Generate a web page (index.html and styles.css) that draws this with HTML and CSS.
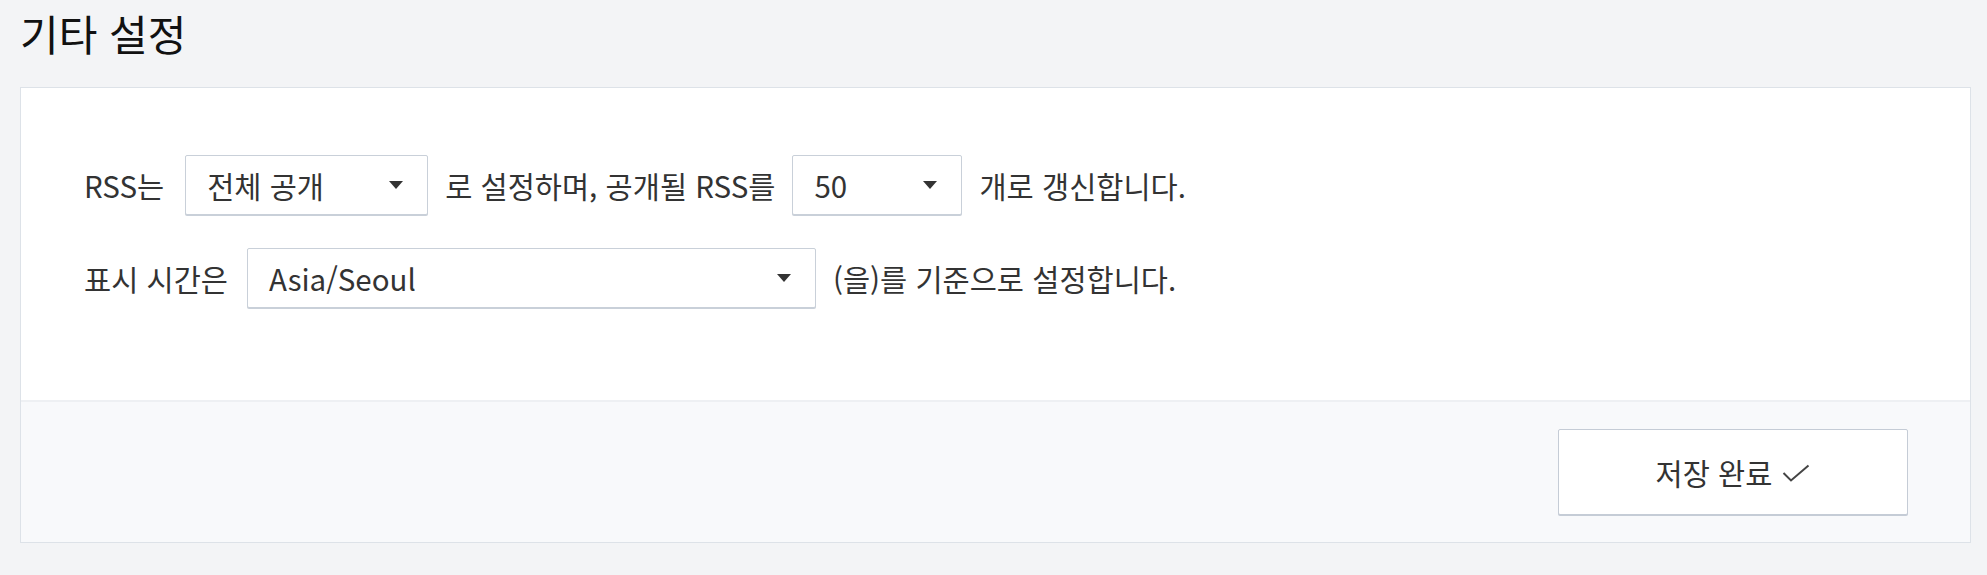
FILE: index.html
```html
<!DOCTYPE html>
<html lang="ko">
<head>
<meta charset="utf-8">
<title>기타 설정</title>
<link rel="stylesheet" href="styles.css">
</head>
<body>
<div class="page">
  <h1 class="title">기타 설정</h1>
  <section class="card">
    <div class="card-body">
      <div class="row">
        <span class="label">RSS는</span>
        <div class="select select-visibility"><span class="value">전체 공개</span><span class="caret"></span></div>
        <span class="label">로 설정하며, 공개될 RSS를</span>
        <div class="select select-count"><span class="value">50</span><span class="caret"></span></div>
        <span class="label">개로 갱신합니다.</span>
      </div>
      <div class="row">
        <span class="label">표시 시간은</span>
        <div class="select select-tz"><span class="value">Asia/Seoul</span><span class="caret"></span></div>
        <span class="label">(을)를 기준으로 설정합니다.</span>
      </div>
    </div>
    <div class="card-footer">
      <button class="save-btn" type="button"><span>저장 완료</span><svg class="check" width="28" height="18" viewBox="0 0 28 18"><polyline points="1.5,9 9,16.5 26.5,1.5" fill="none" stroke="#444" stroke-width="2"/></svg></button>
    </div>
  </section>
</div>
</body>
</html>
```

FILE: styles.css
```css
html, body {
  margin: 0;
  padding: 0;
}
body {
  background: #f3f4f6;
  font-family: "Noto Sans CJK KR", "Noto Sans", sans-serif;
  color: #333;
}
.page {
  padding: 0 16px 0 20px;
}
.title {
  margin: 0;
  padding-top: 8px;
  height: 79px;
  font-size: 42px;
  line-height: 50px;
  font-weight: 400;
  color: #111;
}
.card {
  background: #fff;
  border: 1px solid #dde2e8;
}
.card-body {
  padding: 67px 63px 92px;
  display: flex;
  flex-direction: column;
  gap: 33px;
}
.row {
  display: flex;
  align-items: center;
  font-size: 29.5px;
  line-height: 40px;
}
.label {
  white-space: nowrap;
}
.select {
  box-sizing: border-box;
  height: 60px;
  margin: 0 17px 0 21px;
  display: flex;
  align-items: center;
  justify-content: space-between;
  padding: 0 24px 0 21px;
  background: #fff;
  border: 1px solid #c9d0d9;
  box-shadow: 0 1px 0 #c9d0d9;
  border-radius: 2px;
}
.select-visibility { width: 243px; }
.select-count { width: 170px; margin-left: 17px; }
.select-tz { width: 569px; margin-left: 19px; }
.value {
  color: #333;
}
.caret {
  width: 0;
  height: 0;
  border-left: 7px solid transparent;
  border-right: 7px solid transparent;
  border-top: 8px solid #333;
}
.card-footer {
  background: #f8f9fb;
  border-top: 2px solid #eef0f3;
  padding: 27px 62px 27px;
  display: flex;
  justify-content: flex-end;
}
.save-btn {
  box-sizing: border-box;
  width: 350px;
  height: 86px;
  background: #fff;
  border: 1px solid #c5ccd6;
  box-shadow: 0 1px 0 #c5ccd6;
  border-radius: 2px;
  font-family: "Noto Sans CJK KR", "Noto Sans", sans-serif;
  font-size: 29.5px;
  color: #333;
  display: flex;
  align-items: center;
  justify-content: center;
  gap: 10px;
  padding: 0;
}
.check {
  display: block;
  margin-top: 2px;
}
```
